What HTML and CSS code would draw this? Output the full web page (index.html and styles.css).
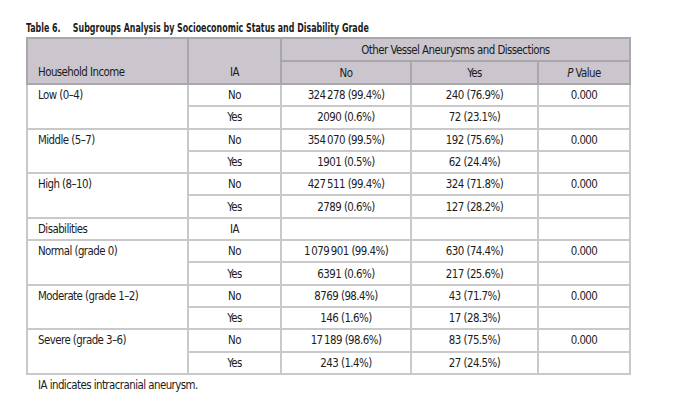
FILE: index.html
```html
<!DOCTYPE html>
<html>
<head>
<meta charset="utf-8">
<link rel="stylesheet" href="styles.css">
</head>
<body>
<div class="page">
  <div class="caption"><span class="caption-text"><span class="label">Table 6.</span>Subgroups Analysis by Socioeconomic Status and Disability Grade</span></div>
  <table class="data">
    <colgroup>
      <col class="c1"><col class="c2"><col class="c3"><col class="c4"><col class="c5">
    </colgroup>
    <thead>
      <tr class="h1">
        <th rowspan="2" class="left bottom">Household Income</th>
        <th rowspan="2" class="bottom">IA</th>
        <th colspan="3">Other Vessel Aneurysms and Dissections</th>
      </tr>
      <tr class="h2">
        <th>No</th>
        <th>Yes</th>
        <th><i>P</i> Value</th>
      </tr>
    </thead>
    <tbody>
      <tr><td rowspan="2" class="left top">Low (0–4)</td><td>No</td><td>324&#8201;278 (99.4%)</td><td>240 (76.9%)</td><td>0.000</td></tr>
      <tr><td>Yes</td><td>2090 (0.6%)</td><td>72 (23.1%)</td><td></td></tr>
      <tr><td rowspan="2" class="left top">Middle (5–7)</td><td>No</td><td>354&#8201;070 (99.5%)</td><td>192 (75.6%)</td><td>0.000</td></tr>
      <tr><td>Yes</td><td>1901 (0.5%)</td><td>62 (24.4%)</td><td></td></tr>
      <tr><td rowspan="2" class="left top">High (8–10)</td><td>No</td><td>427&#8201;511 (99.4%)</td><td>324 (71.8%)</td><td>0.000</td></tr>
      <tr><td>Yes</td><td>2789 (0.6%)</td><td>127 (28.2%)</td><td></td></tr>
      <tr><td class="left">Disabilities</td><td>IA</td><td></td><td></td><td></td></tr>
      <tr><td rowspan="2" class="left top">Normal (grade 0)</td><td>No</td><td>1&#8201;079&#8201;901 (99.4%)</td><td>630 (74.4%)</td><td>0.000</td></tr>
      <tr><td>Yes</td><td>6391 (0.6%)</td><td>217 (25.6%)</td><td></td></tr>
      <tr><td rowspan="2" class="left top">Moderate (grade 1–2)</td><td>No</td><td>8769 (98.4%)</td><td>43 (71.7%)</td><td>0.000</td></tr>
      <tr><td>Yes</td><td>146 (1.6%)</td><td>17 (28.3%)</td><td></td></tr>
      <tr><td rowspan="2" class="left top">Severe (grade 3–6)</td><td>No</td><td>17&#8201;189 (98.6%)</td><td>83 (75.5%)</td><td>0.000</td></tr>
      <tr><td>Yes</td><td>243 (1.4%)</td><td>27 (24.5%)</td><td></td></tr>
    </tbody>
  </table>
  <div class="note">IA indicates intracranial aneurysm.</div>
</div>
</body>
</html>
```

FILE: styles.css
```css
html, body {
  margin: 0;
  padding: 0;
  background: #ffffff;
}

body {
  font-family: "DejaVu Sans Condensed", "Liberation Sans", sans-serif;
  color: #1c1c1c;
}

.page {
  padding: 17px 0 0 26px;
}

.caption {
  height: 20px;
}

.caption-text {
  display: inline-block;
  font-weight: bold;
  font-size: 11.5px;
  line-height: 14px;
  white-space: nowrap;
  transform: scaleX(0.765);
  transform-origin: left center;
}

.label {
  margin-right: 16px;
}

.data {
  border-collapse: collapse;
  table-layout: fixed;
  width: 603px;
  font-size: 11.4px;
  letter-spacing: -0.55px;
}

.c1 { width: 161px; }
.c2 { width: 93px; }
.c3 { width: 130px; }
.c4 { width: 127px; }
.c5 { width: 92px; }

.data th,
.data td {
  border: 2px solid #c9c9c9;
  padding: 0 4px;
  text-align: center;
  vertical-align: middle;
  font-weight: normal;
  white-space: nowrap;
}

.data thead th {
  background: #cbc6cd;
  border-color: #a9a7aa;
}

.h1 { height: 23px; }
.h2 { height: 23px; }

.data tbody tr { height: 22.3px; }

.data .left {
  text-align: left;
  padding-left: 10px;
}

.data .bottom { vertical-align: bottom; padding-bottom: 4px; }
.data .top { vertical-align: top; padding-top: 3px; }

.note {
  font-size: 11.4px;
  letter-spacing: -0.55px;
  padding: 3px 0 0 12px;
}
```
